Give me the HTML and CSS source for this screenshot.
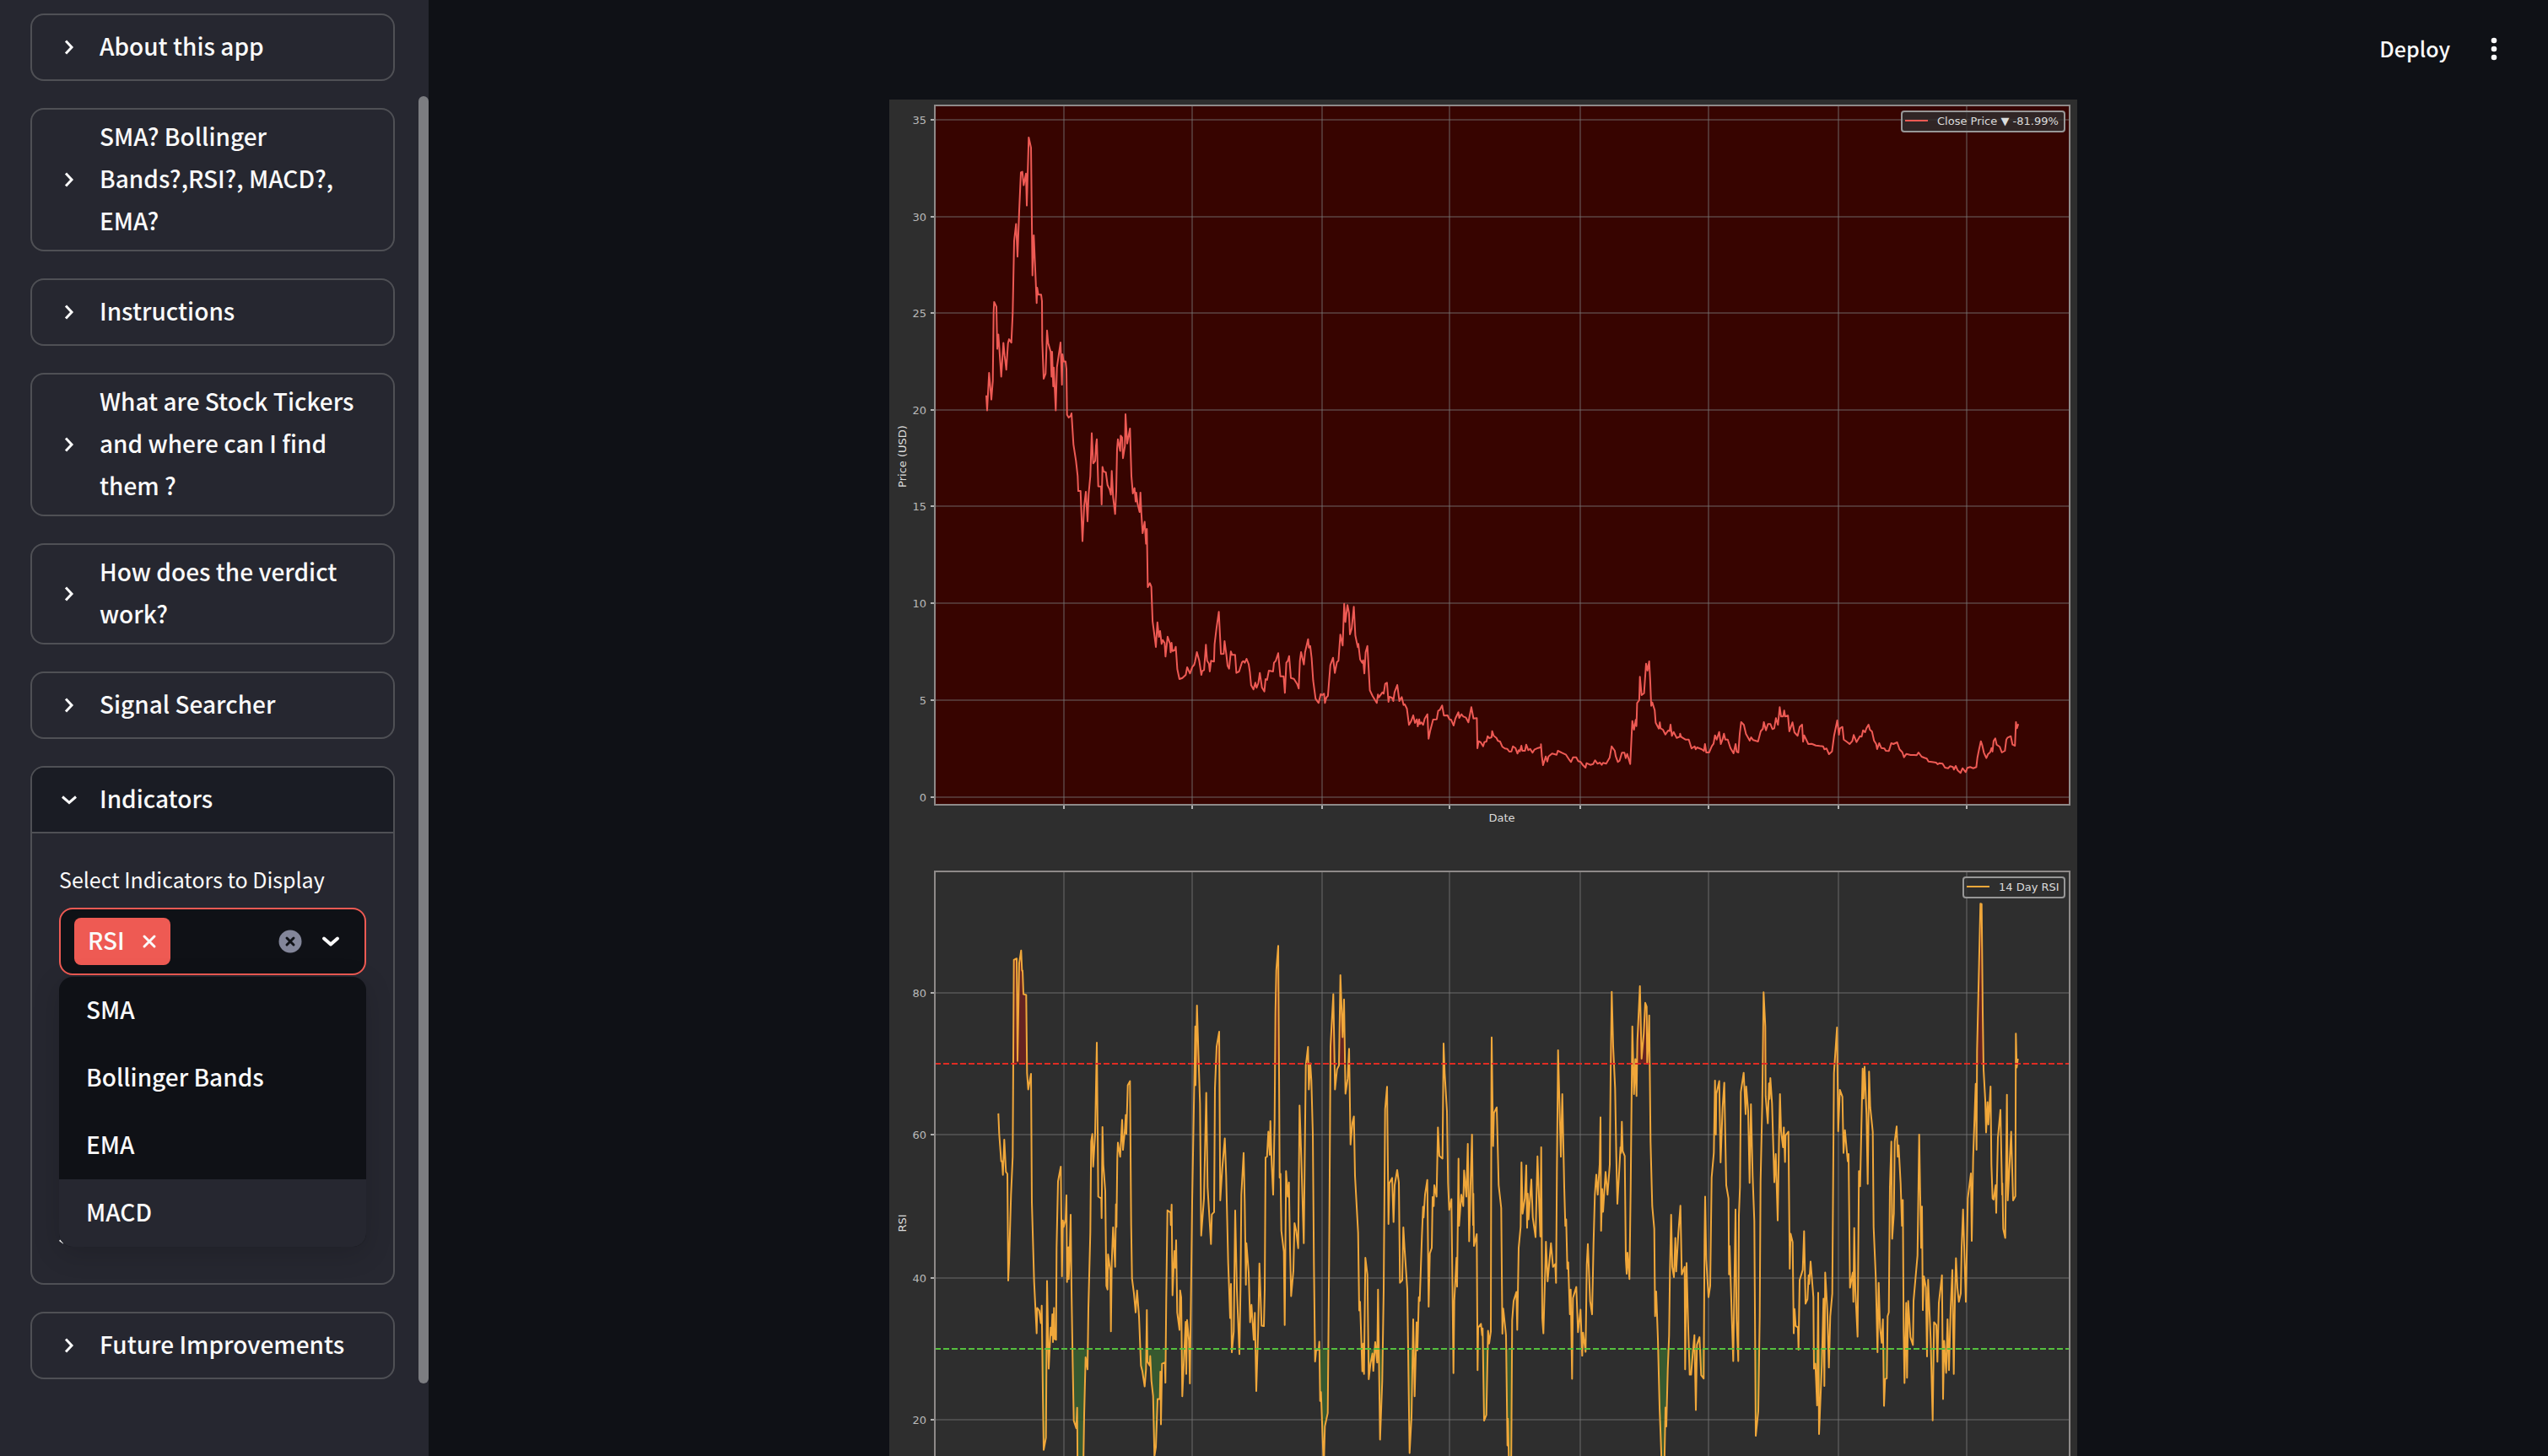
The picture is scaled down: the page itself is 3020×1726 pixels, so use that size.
FILE: index.html
```html
<!DOCTYPE html>
<html lang="en">
<head>
<meta charset="utf-8">
<title>Stock Indicators</title>
<link rel="stylesheet" href="styles.css">
</head>
<body>
<svg class="sprite" aria-hidden="true">
  <symbol id="chev-right" viewBox="0 0 24 24"><path d="M8 4.500 15 12 8 19.500"/></symbol>
  <symbol id="chev-down" viewBox="0 0 24 24"><path d="M4 8.500 12 15.500 20 8.500"/></symbol>
</svg>
<div class="app">
  <aside class="sidebar">
    <details class="card"><summary><svg class="chev"><use href="#chev-right"/></svg><span class="text">About this app</span></summary></details>
    <details class="card"><summary><svg class="chev"><use href="#chev-right"/></svg><span class="text">SMA? Bollinger Bands?,RSI?, MACD?, EMA?</span></summary></details>
    <details class="card"><summary><svg class="chev"><use href="#chev-right"/></svg><span class="text">Instructions</span></summary></details>
    <details class="card"><summary><svg class="chev"><use href="#chev-right"/></svg><span class="text">What are Stock Tickers and where can I find them ?</span></summary></details>
    <details class="card"><summary><svg class="chev"><use href="#chev-right"/></svg><span class="text">How does the verdict work?</span></summary></details>
    <details class="card"><summary><svg class="chev"><use href="#chev-right"/></svg><span class="text">Signal Searcher</span></summary></details>
    <details class="card" open>
      <summary><svg class="chev"><use href="#chev-down"/></svg><span class="text">Indicators</span></summary>
      <div class="card-body">
        <label class="field-label" for="indicators">Select Indicators to Display</label>
        <div class="select">
          <div class="select-box">
            <span class="tag"><span class="text">RSI</span>
              <button type="button" class="icon-btn" aria-label="Remove RSI"><svg class="cross" viewBox="0 0 18 18"><path d="M3 3 15 15M15 3 3 15"/></svg></button>
            </span>
            <input id="indicators" type="text" size="1" role="combobox" aria-expanded="true" aria-controls="options">
            <button type="button" class="icon-btn" aria-label="Clear all"><svg class="clear" viewBox="0 0 28 28"><circle cx="14" cy="14" r="13.500"/><path d="M10 10 18 18M18 10 10 18"/></svg></button>
            <button type="button" class="icon-btn" aria-label="Open"><svg class="open"><use href="#chev-down"/></svg></button>
          </div>
          <ul class="options" id="options" role="listbox">
            <li role="option">SMA</li>
            <li role="option">Bollinger Bands</li>
            <li role="option">EMA</li>
            <li role="option" class="active" aria-selected="true">MACD</li>
          </ul>
        </div>
      </div>
    </details>
    <details class="card"><summary><svg class="chev"><use href="#chev-right"/></svg><span class="text">Future Improvements</span></summary></details>
    <div class="scroll-thumb"></div>
  </aside>
  <main class="main">
    <div class="toolbar">
      <button type="button" class="deploy">Deploy</button>
      <button type="button" class="icon-btn" aria-label="Menu"><svg class="kebab" viewBox="0 0 8 28"><circle cx="4" cy="4" r="3.300"/><circle cx="4" cy="14" r="3.300"/><circle cx="4" cy="24" r="3.300"/></svg></button>
    </div>
    <svg class="figure" viewBox="1054 118 1408 1608" role="img" aria-label="Close price and RSI charts">
      <defs>
        <clipPath id="over"><rect x="1108" y="1033" width="1345" height="228"/></clipPath>
        <clipPath id="under"><rect x="1108" y="1599" width="1345" height="127"/></clipPath>
      </defs>
      <rect class="price-bg" x="1108" y="126" width="1345" height="828"/>
      <g id="grid"></g>
      <path id="price-line" class="price-line"/>
      <rect class="frame" x="1108" y="125" width="1345" height="829"/>
      <path id="rsi-over" class="rsi-over" clip-path="url(#over)"/>
      <path id="rsi-under" class="rsi-under" clip-path="url(#under)"/>
      <path id="rsi-line" class="rsi-line"/>
      <path class="limit-high" d="M1108 1261H2453"/>
      <path class="limit-low" d="M1108 1599H2453"/>
      <path class="frame" d="M1108 1740V1033H2453V1740"/>
      <text class="mid" x="1780" y="974">Date</text>
      <text class="mid" transform="translate(1074 541) rotate(-90)">Price (USD)</text>
      <text class="mid" transform="translate(1074 1450) rotate(-90)">RSI</text>
      <rect class="legend" x="2254" y="132" width="193" height="24" rx="3"/>
      <path class="price-line" d="M2258 143H2285"/>
      <text x="2296" y="148">Close Price ▼ -81.99%</text>
      <rect class="legend" x="2327" y="1040" width="120" height="24" rx="3"/>
      <path class="rsi-line" d="M2331 1051H2358"/>
      <text x="2369" y="1056">14 Day RSI</text>
    </svg>
  </main>
</div>
<script src="charts.js"></script>
</body>
</html>
```
FILE: styles.css
```css
* { box-sizing: border-box; }

body {
  margin: 0;
  background: #0f1116;
  color: #fafafa;
  font-family: "Noto Sans CJK SC", "Noto Sans", sans-serif;
  font-size: 28px;
  font-weight: 500;
  line-height: 50px;
}

button, input {
  font: inherit;
  color: inherit;
  background: none;
  border: 0;
  padding: 0;
}

.sprite { position: absolute; width: 0; height: 0; }

.app {
  display: flex;
  height: 100vh;
  overflow: hidden;
}

/* Sidebar */
.sidebar {
  position: relative;
  flex: 0 0 508px;
  min-width: 0;
  display: flex;
  flex-direction: column;
  gap: 32px;
  padding: 16px 40px 0 36px;
  background: #262730;
}

.scroll-thumb {
  position: absolute;
  top: 114px;
  right: 0;
  width: 12px;
  height: 1526px;
  border-radius: 6px;
  background: #7c7d81;
}

.card {
  border: 2px solid #4f5055;
  border-radius: 16px;
}

.card summary {
  display: flex;
  align-items: center;
  gap: 24px;
  min-height: 76px;
  padding: 6px 32px;
  list-style: none;
}

.text { padding-bottom: 4px; }

.card[open] summary {
  background: #1a1c24;
  border-radius: 14px 14px 0 0;
}

.chev, .open {
  flex: none;
  width: 24px;
  height: 24px;
  fill: none;
  stroke: #fafafa;
  stroke-width: 3;
}

.card-body {
  min-height: 535px;
  padding: 30px 32px;
  border-top: 2px solid #4f5055;
}

.field-label {
  display: block;
  font-size: 25px;
  font-weight: 400;
  line-height: 48px;
  margin-bottom: 10px;
}

.select { position: relative; }

.select::before {
  content: "";
  position: absolute;
  top: 395px;
  left: 0;
  width: 6px;
  height: 2px;
  background: #fafafa;
  transform: rotate(36deg);
}

.select-box {
  display: flex;
  align-items: center;
  height: 80px;
  padding: 0 28px 0 16px;
  border: 2px solid #ee5a53;
  border-radius: 16px;
  background: #0f1116;
}

.select-box input {
  flex: 1;
  min-width: 0;
  outline: 0;
}

.tag {
  display: flex;
  align-items: center;
  gap: 20px;
  height: 56px;
  padding: 0 16px;
  border-radius: 8px;
  background: #ee5a53;
}

.icon-btn { display: flex; }

.cross {
  width: 18px;
  height: 18px;
  stroke: #fafafa;
  stroke-width: 3;
  stroke-linecap: round;
}

.clear {
  width: 28px;
  height: 28px;
  margin-right: 22px;
  fill: #83869a;
  stroke: none;
}

.clear path {
  stroke: #0f1116;
  stroke-width: 3;
  stroke-linecap: round;
}

.open {
  stroke-width: 4;
  stroke-linecap: round;
  stroke-linejoin: round;
}

.options {
  position: absolute;
  top: 82px;
  left: 0;
  right: 0;
  margin: 0;
  padding: 0;
  list-style: none;
  overflow: hidden;
  border-radius: 16px;
  background: #0f1116;
  box-shadow: 0 8px 32px rgba(0, 0, 0, .16);
}

.options li {
  height: 80px;
  padding: 0 32px;
  line-height: 76px;
}

.options .active { background: #262730; }

/* Main area */
.main {
  position: relative;
  flex: 1;
  min-width: 0;
  padding: 118px 12px 0 0;
}

.toolbar {
  position: absolute;
  top: 32px;
  right: 60px;
  display: flex;
  align-items: center;
  gap: 48px;
}

.deploy {
  padding-bottom: 2px;
  font-size: 25px;
}

.kebab {
  width: 8px;
  height: 28px;
  fill: #fafafa;
}

.figure {
  display: block;
  width: 100%;
  max-width: 1408px;
  margin: 0 auto;
  background: #2e2e2e;
}

.figure text {
  font-family: "DejaVu Sans", sans-serif;
  font-size: 13px;
  font-weight: 400;
  fill: #dcdcdc;
}

.figure .mid { text-anchor: middle; }
.figure .tick-label { text-anchor: end; fill: #b9b9b9; }

.price-bg { fill: #370400; }
.grid-line { fill: none; stroke: rgba(118, 118, 118, .42); stroke-width: 2; }
.tick { stroke: #b0b0b0; stroke-width: 2; }
.frame { fill: none; stroke: #8e8a89; stroke-width: 2; }
.price-line { fill: none; stroke: #ee5a54; stroke-width: 2; stroke-linejoin: round; }
.rsi-line { fill: none; stroke: #f0a73a; stroke-width: 2; stroke-linejoin: round; }
.rsi-over { fill: #652321; }
.rsi-under { fill: #37592f; }
.limit-high { stroke: #e02b22; stroke-width: 2; stroke-dasharray: 7 3; }
.limit-low { stroke: #55c03e; stroke-width: 2; stroke-dasharray: 7 3; }
.legend { fill: rgba(46, 46, 46, .8); stroke: #979797; stroke-width: 2; }
```
FILE: charts.js
```js
// Each series is a list of runs: an origin, the units per pixel, and the points.
const price = [
  [1040, 100, 3, 2.8, `387,1032 390,1082 397,958 405,1046 410,985 413,755 415,722 423,738 426,878 430,830 440,970 448,858 452,900 458,947 464,860 468,846 476,857 481,760 486,520 493,463 498,572 504,420 510,292 515,290 520,335 528,296 531,402 538,176 546,210 551,634 556,501 566,726 568,675 572,698 582,698 585,720 586,850 591,977 598,960 603,817 607,858 616,888 619,970 621,888 625,1002 627,940 634,1082 638,940 651,857 656,997 658,896 662,920 669,920 672,945 674,1097 680,1106 687,1100 690,1092 697,1195 706,1250 712,1300 714,1350 722,1350 729,1516 735,1400 741,1352 747,1450 751,1360 757,1300 762,1158 767,1258 774,1250 777,1200 780,1178 785,1334 795,1335 797,1394 800,1270 804,1285 812,1288 818,1330 826,1345 830,1362 833,1283 838,1370 845,1426 849,1350 852,1210 855,1178 863,1217 865,1166 870,1172 873,1241 880,1200 882,1095 888,1192 898,1142 903,1300 908,1358 914,1340 918,1385 920,1355 925,1392 932,1420 935,1355 938,1420 943,1490 950,1452 955,1525 958,1476`],
  [1300, 500, 2.8, 3, `166,381 169,588 176,574 181,587 185,710 190,750 196,801 201,713 206,765 210,744 215,790 219,776 225,787 228,835 235,764 243,790 245,820 248,786 251,815 258,813 262,800 267,880 274,915 284,911 295,900 300,873 309,895 317,872 323,864 326,853 332,819 340,850 347,900 350,886 356,883 362,793 366,850 372,860 375,888 379,850 389,853 391,790 397,735 405,676 412,826 421,825 424,780 430,830 434,868 439,878 445,817 449,829 459,829 463,893 472,888 482,855 486,851 491,857 497,843 504,862 508,890 512,937 520,952 526,928 530,946 536,930 541,893 548,945 556,959 560,915 565,918 571,885 585,888 588,857 594,850 602,823 609,905 620,905 624,964 629,857 634,850 638,833 644,911 654,914 665,933 670,949 674,850 678,819 687,863 691,820 701,773 704,803 708,797 713,840 718,920 726,985 736,1000 743,968 748,972 754,967 757,1000 762,980 767,975 775,865 784,839 790,893 797,855 802,850 808,757 816,796 821,647 825,712 832,652 837,680 840,756 846,735 853,658 858,760 866,802 868,790 874,845 881,857 884,848 888,895 892,820 898,797 906,955 915,975 929,1000 933,970 936,980 948,962 952,967 957,932 963,928 968,996 971,978 980,982 984,993 988,962 997,936 1004,993 1012,979 1018,1007 1022,1005 1029,1020 1036,1078 1043,1065 1050,1044 1056,1071 1062,1058 1065,1083 1070,1058 1072,1075 1077,1069 1083,1078 1088,1056 1097,1040 1101,1127 1106,1100 1116,1059 1128,1058 1133,1028 1138,1025 1146,1009 1152,1045 1164,1044 1170,1058 1176,1060 1184,1080 1190,1055 1200,1033 1203,1053 1210,1040 1216,1048 1225,1052 1233,1069 1243,1015 1250,1055 1261,1054 1263,1161 1267,1136 1274,1140 1282,1154 1286,1139 1293,1137 1297,1118 1302,1125 1310,1122 1312,1100 1317,1117 1326,1124 1331,1135 1338,1137 1346,1156 1354,1162 1362,1163 1369,1173 1376,1172 1381,1154 1389,1160 1396,1180 1400,1168 1404,1172 1409,1152 1412,1170 1421,1170 1425,1148 1432,1168 1438,1163 1446,1177 1452,1166 1464,1160 1474,1157 1474,1147 1477,1190 1481,1221 1490,1190 1495,1208 1499,1190 1511,1180 1526,1184 1530,1170 1545,1178 1557,1184`],
  [1840, 680, 2.45, 3, `49,662 54,670 60,653 69,653 75,667 82,670 88,680 96,690 99,674 110,680 118,677 124,664 131,676 138,672 143,680 147,673 156,676 166,655 172,614 181,630 184,650 190,670 195,665 202,637 209,637 213,656 217,641 226,677 232,524 237,555 242,520 244,542 246,460 252,450 254,367 259,432 266,425 272,320 276,345 281,312 284,380 287,470 290,458 297,485 300,530 309,551 312,529 314,550 321,555 328,572 336,558 340,560 343,537 347,577 352,563 361,584 370,580 371,569 374,581 386,590 396,590 404,622 413,614 416,625 420,618 434,625 440,631 443,606 447,636 455,636 463,613 468,605 472,575 477,590 484,563 489,606 494,590 498,569 502,590 509,590 517,620 526,639 532,606 535,633 540,636 544,570 548,528 556,538 562,570 573,594 577,582 583,592 597,597 605,560 611,552 614,528 620,557 626,535 633,535 639,553 644,550 649,514 655,538 660,475 664,508 670,508 673,487 676,508 684,505 688,561 697,529 703,565 712,577 718,545 725,537 728,598 731,575 743,606 753,605 765,611 776,613 786,614 790,625 796,622 803,642 812,632 818,575 827,522 832,573 835,550 842,545 846,590 857,600 863,606 871,595 875,574 883,599 893,578 898,580 902,557 908,564 912,550 918,537 922,555 928,562 934,594 940,606 943,624 949,603 955,620 964,622 968,630 977,631 984,603 990,606 1001,600 1008,625 1016,635 1021,653 1028,641 1040,645 1050,645 1058,646 1063,636 1072,651 1080,655 1087,658 1092,668 1102,670 1114,672 1119,678 1124,674 1133,676 1140,690 1149,692 1155,685 1163,688 1166,697 1171,684 1177,700 1185,709 1191,692 1200,706 1205,691 1213,688 1222,692 1231,688 1234,655 1239,625 1244,596 1248,610 1253,637 1260,656 1265,642 1271,635 1275,620 1278,633 1281,595 1286,586 1290,608 1299,616 1305,636 1314,630 1318,590 1322,583 1331,578 1336,608 1343,612 1346,528 1349,550 1353,535`]
];

const rsi = [
  [1040, 1020, 3, 2.221, `430,666 433,720 440,792 443,792 446,828 451,735 457,820 462,825 465,1106 468,1060 475,880 481,780 485,262 495,258 498,528 504,270 511,237 514,290 516,290 519,352 529,354 532,560 536,603 546,562 549,900 557,1110 566,1245 568,1178 575,1185 581,1218 584,1172 588,1400 591,1552 599,1520 603,1107 609,1338 616,1230 619,1250 622,1195 624,1268 628,1178 630,1260 635,1262 637,1020 642,845 652,806 656,1095 659,948 662,965 669,945 672,882 674,1110 679,1018 680,1102 683,1050 687,933 690,1130 694,1310 698,1475 707,1495 710,1441 712,1640 731,1640 735,1460 740,1308 747,1340 750,1180 757,980 760,740 764,720 767,806 774,720 780,480 785,885 796,890 797,942 800,702 803,800 810,870 814,1120 818,1130 820,1037 828,1080 830,1240 833,1060 838,966 845,1070 848,905 850,965 853,780 855,743 863,780 870,683 873,762 880,710 883,670 885,720 890,592 898,581 902,960 905,1100 912,1140 918,1190 923,1132 930,1200 937,1330 942,1345 950,1385 955,1340 958,1184 960,1320 968,1330 970,1305 974,1370 980,1410 985,1568 990,1545 996,1418 1004,1418 1006,1346 1008,1485 1012,1325 1022,1322 1024,1375 1027,1150 1031,921 1042,927 1043,960 1046,906 1049,1145 1056,1028 1059,1072 1062,1000 1066,1190 1074,1236 1076,1132 1080,1150 1084,1411 1092,1280 1096,1215 1098,1352 1101,1210 1108,1265 1111,1377 1115,1130 1119,900 1130,437 1131,592 1136,382 1141,500 1147,640 1151,988 1161,890 1169,612 1174,860 1186,1010 1189,932 1197,926 1200,600 1206,490 1215,451 1219,895 1226,810 1235,732 1240,830 1247,1060 1250,1120 1254,1205 1257,1115 1260,1295 1267,1240 1272,922 1278,1130 1287,1300 1291,1130 1294,880 1302,770 1306,900 1310,1117 1312,1008 1320,1085 1325,1216 1330,1170 1338,1262 1342,1191 1347,1397 1354,1230 1358,1061 1366,1225 1374,1226 1377,1130`],
  [1500, 1020, 3, 2.221, `0,782 5,780 10,714 15,775 17,686 22,800 27,880 32,690 35,400 38,290 45,225 48,560 50,835 53,825 56,975 65,1030 68,1223 73,818 79,885 83,848 87,1020 91,1147 99,1080 103,955 109,975 116,1021 121,645 127,780 136,1008 143,540 151,491 154,603 159,534 163,580 168,720 172,1060 176,1319 180,1290 189,1288 191,1267 194,1423 197,1400 201,1480 207,1600 211,1490 221,1455 226,1060 231,490 241,352 247,603 254,550 261,540 266,302 274,465 279,366 284,614 292,575 297,496 302,748 309,690 314,674 318,830 329,980 333,1185 336,1162 344,1345 347,1272 350,1352 355,1046 362,1090 367,1366 373,1325 380,1298 383,1344 390,1268 397,1322 400,1130 407,1525 415,1370 420,1130 425,655 432,596 437,957 440,850 450,836 455,952 459,855 468,815 474,848 478,1112 486,1105 490,966 494,1020 504,1130 512,1560 519,1465 525,1208 530,1411 537,1216 540,1290 545,1150 548,1160 556,990 560,912 562,940 567,880 575,841 580,1175 584,1035 591,1020 594,886 598,910 600,855 608,885 613,703 618,778 629,785 633,482 637,560 645,660 649,850 653,920 661,892 668,1350 671,1160 679,1046 681,1122 686,785 688,962 696,880 703,910 706,816 714,885 719,746 724,1003 729,850 734,722 738,960 739,877 741,1015 751,984 754,1342 756,1230 766,1220 770,1250 772,1232 777,1475 785,1460 791,1238 795,1272 801,1240 803,560 804,466 809,752 812,665 822,650 829,855 838,915 842,1246 845,1180 855,1250 860,1540 862,1470 867,1640 873,1640 877,1210 882,1160 892,1136 895,1236 900,1020 907,965 910,795 914,930 922,890 927,803 930,967 932,877 935,945 945,840 950,940 960,992 967,779 977,990 980,755 984,1205 988,1245 995,1060 997,1004 1003,1108 1015,1008 1022,1070 1030,1063 1033,1112 1036,820 1040,500 1050,780 1055,615 1062,860 1066,962 1069,945 1073,1075 1076,1058 1082,1195 1085,1130 1090,1365 1093,1152 1105,1123 1111,1242 1120,1183 1126,1304 1129,1243 1138,1294 1142,1065 1146,1010 1154,1160 1161,1195 1166,1010 1171,880 1176,827 1181,880 1188,800 1191,676 1193,975 1197,865 1200,925 1209,820 1216,880 1224,800 1227,560 1231,346 1236,490 1243,600 1247,780 1251,904 1262,755 1264,770 1267,688 1270,765 1277,778 1281,1050 1284,1088 1287,1033 1294,1102 1298,870 1304,437 1310,615 1315,523 1319,620 1322,475 1331,331 1337,522 1345,455 1350,375 1355,385 1357,533 1361,480 1364,408 1369,740 1375,910 1382,970 1385,1200 1389,1135 1395,1260 1401,1440 1405,1515 1411,1640 1417,1640 1422,1440`],
  [1960, 1020, 3, 2.221, `45,1490 50,1340 55,1250 58,1080 62,933 66,1070 72,1097 77,994 80,1082 88,980 95,909 100,1090 110,1070 112,1340 117,1060 122,1210 128,1354 133,1354 139,1300 145,1250 150,1447 154,1275 163,1255 169,1355 178,1364 181,1000 183,885 187,1050 195,1150 201,1120 206,835 214,770 218,580 221,722 223,615 233,581 238,795 245,650 251,585 255,740 258,855 266,890 268,1090 270,1015 277,1180 283,1318 291,919 295,1210 301,1318 303,935 307,860 310,610 320,559 327,668 329,595 336,660 341,849 346,642 352,830 358,950 363,1515 372,1450 377,1200 380,845 386,640 391,347 397,437 398,620 406,692 410,587 412,628 415,573 421,640 429,847 434,773 441,948 446,720 449,615 453,712 460,755 463,703 467,794 469,724 479,714 484,1075 487,983 494,1005 498,1245 501,1181 505,1225 513,1230 515,1288 519,1105 530,1078 535,976 540,1167 547,1155 551,1092 553,1115 558,1056 568,1150 570,1338 575,1325 581,1435 585,1138 588,1510 598,1330 604,1154 607,1384 610,1085 617,1180 623,1335 628,1200 635,1140 641,560 652,440 656,713 662,604 671,622 675,770 680,710 690,792 693,773 698,1125 708,1085 710,1162 713,968 717,1130 725,1254 730,818 734,858 740,650 743,548 746,627 750,543 757,670 761,852 766,556 770,650 779,715 782,965 790,1100 796,1295 800,1112 805,1230 811,1270 815,1208 819,1436 823,1365 829,1364 832,1200 836,1190 840,860 845,740 848,996 854,930 857,740 864,700 868,780 871,750 878,850 883,962 886,894 889,1240 892,1376 898,1165 901,1362 905,1160 913,1255 922,1276 924,1160 938,1040 944,722 951,1020 954,911 957,1184 961,1095 968,1125 972,1306 976,1104 985,1260 992,1474 997,1216 1005,1223 1009,1320 1014,1165 1025,1092 1029,1418 1033,1265 1040,1349 1045,1208 1050,1342 1056,1180 1062,1078 1067,1352 1071,1160 1075,1047 1080,1125 1085,1162 1092,1140 1095,1020 1100,919 1110,1162 1114,1010 1117,890 1128,824 1131,1002 1136,780 1145,588 1148,762 1150,500 1157,270 1162,114 1166,115 1170,400 1173,550 1179,630 1182,716 1187,636 1190,695 1198,595 1201,800 1205,890 1209,893 1216,855 1218,928 1224,730 1233,657 1239,880 1240,850 1243,970 1250,994 1256,617 1259,895 1271,714 1278,895 1286,884 1288,456 1291,545 1295,522`]
];

function toPoints(runs) {
  return runs.flatMap(([ox, oy, sx, sy, list]) =>
    list.split(" ").map(pair => {
      const [x, y] = pair.split(",").map(Number);
      return [(ox + x / sx).toFixed(1), (oy + y / sy).toFixed(1)];
    }));
}

const line = points => "M" + points.map(p => p.join(" ")).join("L");

// Closes a line against a horizontal level so that the gap can be filled.
const area = (points, level) =>
  line(points) + `L${points[points.length - 1][0]} ${level}L${points[0][0]} ${level}Z`;

const setPath = (id, d) => document.getElementById(id).setAttribute("d", d);

const rsiPoints = toPoints(rsi);
setPath("price-line", line(toPoints(price)));
setPath("rsi-line", line(rsiPoints));
setPath("rsi-over", area(rsiPoints, 1261));
setPath("rsi-under", area(rsiPoints, 1599));

// Grid lines, ticks and tick labels
const rows = [[35, 142], [30, 257], [25, 371], [20, 486], [15, 600], [10, 715], [5, 830], [0, 945],
  [80, 1177], [60, 1345], [40, 1515], [20, 1683]];
const columns = [1261, 1413, 1567, 1718, 1873, 2025, 2179, 2331];
document.getElementById("grid").innerHTML =
  rows.map(([value, y]) =>
    `<path class="grid-line" d="M1108 ${y}H2453"/><path class="tick" d="M1103 ${y}H1108"/>` +
    `<text class="tick-label" x="1098" y="${y + 5}">${value}</text>`).join("") +
  columns.map(x =>
    `<path class="grid-line" d="M${x} 126V954M${x} 1033V1726"/><path class="tick" d="M${x} 954V959"/>`).join("");
```
